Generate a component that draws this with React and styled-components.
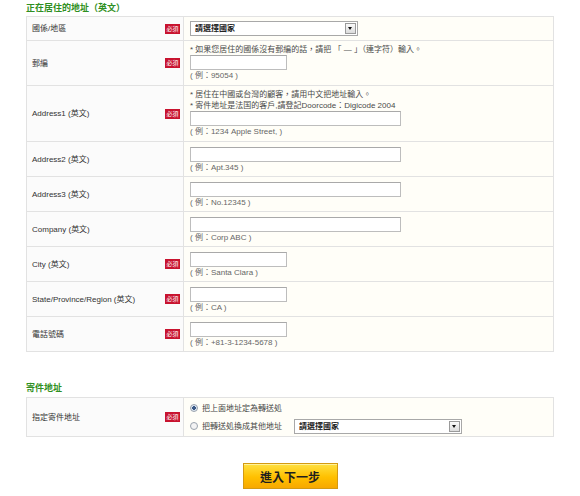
import React from 'react';
import styled, { createGlobalStyle } from 'styled-components';

const GlobalStyle = createGlobalStyle`
  html, body {
    margin: 0;
    padding: 0;
    background: #ffffff;
  }

  body {
    font-family: "Liberation Sans", "Noto Sans CJK TC", sans-serif;
    font-size: 8px;
    color: #333333;
  }
`;

const Page = styled.div`
  width: 528px;
  padding: 0 0 0 26px;
`;

const Section = styled.section`
  margin-top: ${p => p.$gap || 0}px;
`;

const Heading = styled.h2`
  margin: 0;
  font-size: 9px;
  line-height: ${p => p.$lh || 16}px;
  font-weight: bold;
  color: #2f8f22;
`;

const Table = styled.div`
  border: 1px solid #e2e2e2;
  border-top: 0;
`;

const Row = styled.div`
  display: grid;
  grid-template-columns: 157px 1fr;
  border-top: 1px solid #e2e2e2;
`;

const LabelCell = styled.div`
  display: flex;
  align-items: center;
  justify-content: space-between;
  padding: 0 3px 0 5px;
  background: #fbfbfb;
  border-right: 1px solid #e2e2e2;
  line-height: 11px;
`;

const Badge = styled.span`
  display: inline-flex;
  align-items: center;
  justify-content: center;
  width: 15px;
  height: 10px;
  background: #c8132f;
  color: #ffffff;
  font-size: 6px;
  line-height: 10px;
`;

const ContentCell = styled.div`
  display: flex;
  flex-direction: column;
  align-items: flex-start;
  padding: ${p => p.$pad || '3px 6px 4px'};
  background: #fffef8;
  line-height: 11px;
`;

const Hint = styled.div`
  color: #4a4a4a;
`;

const Example = styled.div`
  color: #666666;
`;

const TextInput = styled.input`
  box-sizing: border-box;
  width: ${p => p.$w}px;
  height: 15px;
  margin: 0;
  padding: 0 2px;
  border: 1px solid #bdbdbd;
  border-top-color: #a9a9a9;
  background: #ffffff;
  font: inherit;
`;

const SelectBox = styled.div`
  position: relative;
  width: ${p => p.$w}px;
  height: 15px;
`;

const NativeSelect = styled.select`
  appearance: none;
  box-sizing: border-box;
  width: 100%;
  height: 100%;
  margin: 0;
  padding: 0 0 0 4px;
  border: 1px solid #a8a8a8;
  background: #ffffff;
  font-family: inherit;
  font-size: 8px;
  font-weight: bold;
  color: #222222;
`;

const ArrowBox = styled.span`
  position: absolute;
  top: 2px;
  right: 2px;
  width: 9px;
  height: 9px;
  border: 1px solid #9a9a9a;
  background: linear-gradient(#fafafa, #dcdcdc);
  pointer-events: none;

  &::after {
    content: '';
    position: absolute;
    left: 2px;
    top: 3px;
    border-left: 2.5px solid transparent;
    border-right: 2.5px solid transparent;
    border-top: 3px solid #111111;
  }
`;

const RadioLine = styled.label`
  display: flex;
  align-items: center;
  height: 14px;
  gap: 4px;
  color: #444444;
  margin-top: ${p => (p.$first ? 0 : 4)}px;
`;

const Radio = styled.input`
  appearance: none;
  box-sizing: border-box;
  width: 8px;
  height: 8px;
  margin: 0 0 0 2px;
  border: 1px solid #9aa3ad;
  border-radius: 50%;
  background: #f3f3f3;

  &:checked {
    background: radial-gradient(circle, #3c5a86 0 1.6px, #dde6f2 2px);
  }
`;

const RadioText = styled.span`
  margin-right: ${p => p.$mr || 0}px;
`;

const Actions = styled.div`
  display: flex;
  justify-content: center;
  margin-top: 26px;
`;

const NextButton = styled.button`
  width: 95px;
  height: 26px;
  border: 1px solid #d49a12;
  background: linear-gradient(#ffe040, #ffc000 55%, #f7a800);
  color: #1e1e1e;
  font-family: "Liberation Sans", "Noto Sans CJK TC", sans-serif;
  font-size: 12px;
  font-weight: bold;
  letter-spacing: 0;
  box-shadow: inset 0 1px 0 #fff29a;
  cursor: pointer;
`;

const Select = ({ w }) => (
  <SelectBox $w={w}>
    <NativeSelect defaultValue="">
      <option value="">請選擇國家</option>
    </NativeSelect>
    <ArrowBox />
  </SelectBox>
);

const fields = [
  { label: '郵編', required: true, hints: ['* 如果您居住的國係沒有郵編的話，請把 「 — 」（連字符）輸入。'], w: 97, ex: '95054' },
  {
    label: 'Address1 (英文)',
    required: true,
    hints: ['* 居住在中國或台灣的顧客，請用中文把地址輸入。', '* 寄件地址是法国的客戶,請登記Doorcode：Digicode 2004'],
    w: 211,
    ex: '1234 Apple Street, '
  },
  { label: 'Address2 (英文)', w: 211, ex: 'Apt.345' },
  { label: 'Address3 (英文)', w: 211, ex: 'No.12345' },
  { label: 'Company (英文)', w: 211, ex: 'Corp ABC' },
  { label: 'City (英文)', required: true, w: 97, ex: 'Santa Clara' },
  { label: 'State/Province/Region (英文)', required: true, w: 97, ex: 'CA' },
  { label: '電話號碼', required: true, w: 97, ex: '+81-3-1234-5678' }
];

const FieldRow = ({ label, required, hints = [], w, ex }) => (
  <Row>
    <LabelCell>
      <span>{label}</span>
      {required && <Badge>必須</Badge>}
    </LabelCell>
    <ContentCell $pad={hints.length ? '3px 6px 4px' : '5px 6px 3px'}>
      {hints.map(h => (
        <Hint key={h}>{h}</Hint>
      ))}
      <TextInput type="text" $w={w} />
      <Example>( 例：{ex} )</Example>
    </ContentCell>
  </Row>
);

export default function App() {
  return (
    <Page>
      <GlobalStyle />
      <Section>
        <Heading>正在居住的地址（英文）</Heading>
        <Table>
          <Row>
            <LabelCell>
              <span>國係/地區</span>
              <Badge>必須</Badge>
            </LabelCell>
            <ContentCell $pad="4px 6px 4px">
              <Select w={168} />
            </ContentCell>
          </Row>
          {fields.map(f => (
            <FieldRow key={f.label} {...f} />
          ))}
        </Table>
      </Section>

      <Section $gap={28}>
        <Heading $lh={17}>寄件地址</Heading>
        <Table>
          <Row>
            <LabelCell>
              <span>指定寄件地址</span>
              <Badge>必須</Badge>
            </LabelCell>
            <ContentCell $pad="3px 6px 3px 4px">
              <RadioLine $first>
                <Radio type="radio" name="ship" defaultChecked />
                <RadioText>把上面地址定為轉送処</RadioText>
              </RadioLine>
              <RadioLine>
                <Radio type="radio" name="ship" />
                <RadioText $mr={8}>把轉送処換成其他地址</RadioText>
                <Select w={168} />
              </RadioLine>
            </ContentCell>
          </Row>
        </Table>
      </Section>

      <Actions>
        <NextButton type="button">進入下一步</NextButton>
      </Actions>
    </Page>
  );
}
